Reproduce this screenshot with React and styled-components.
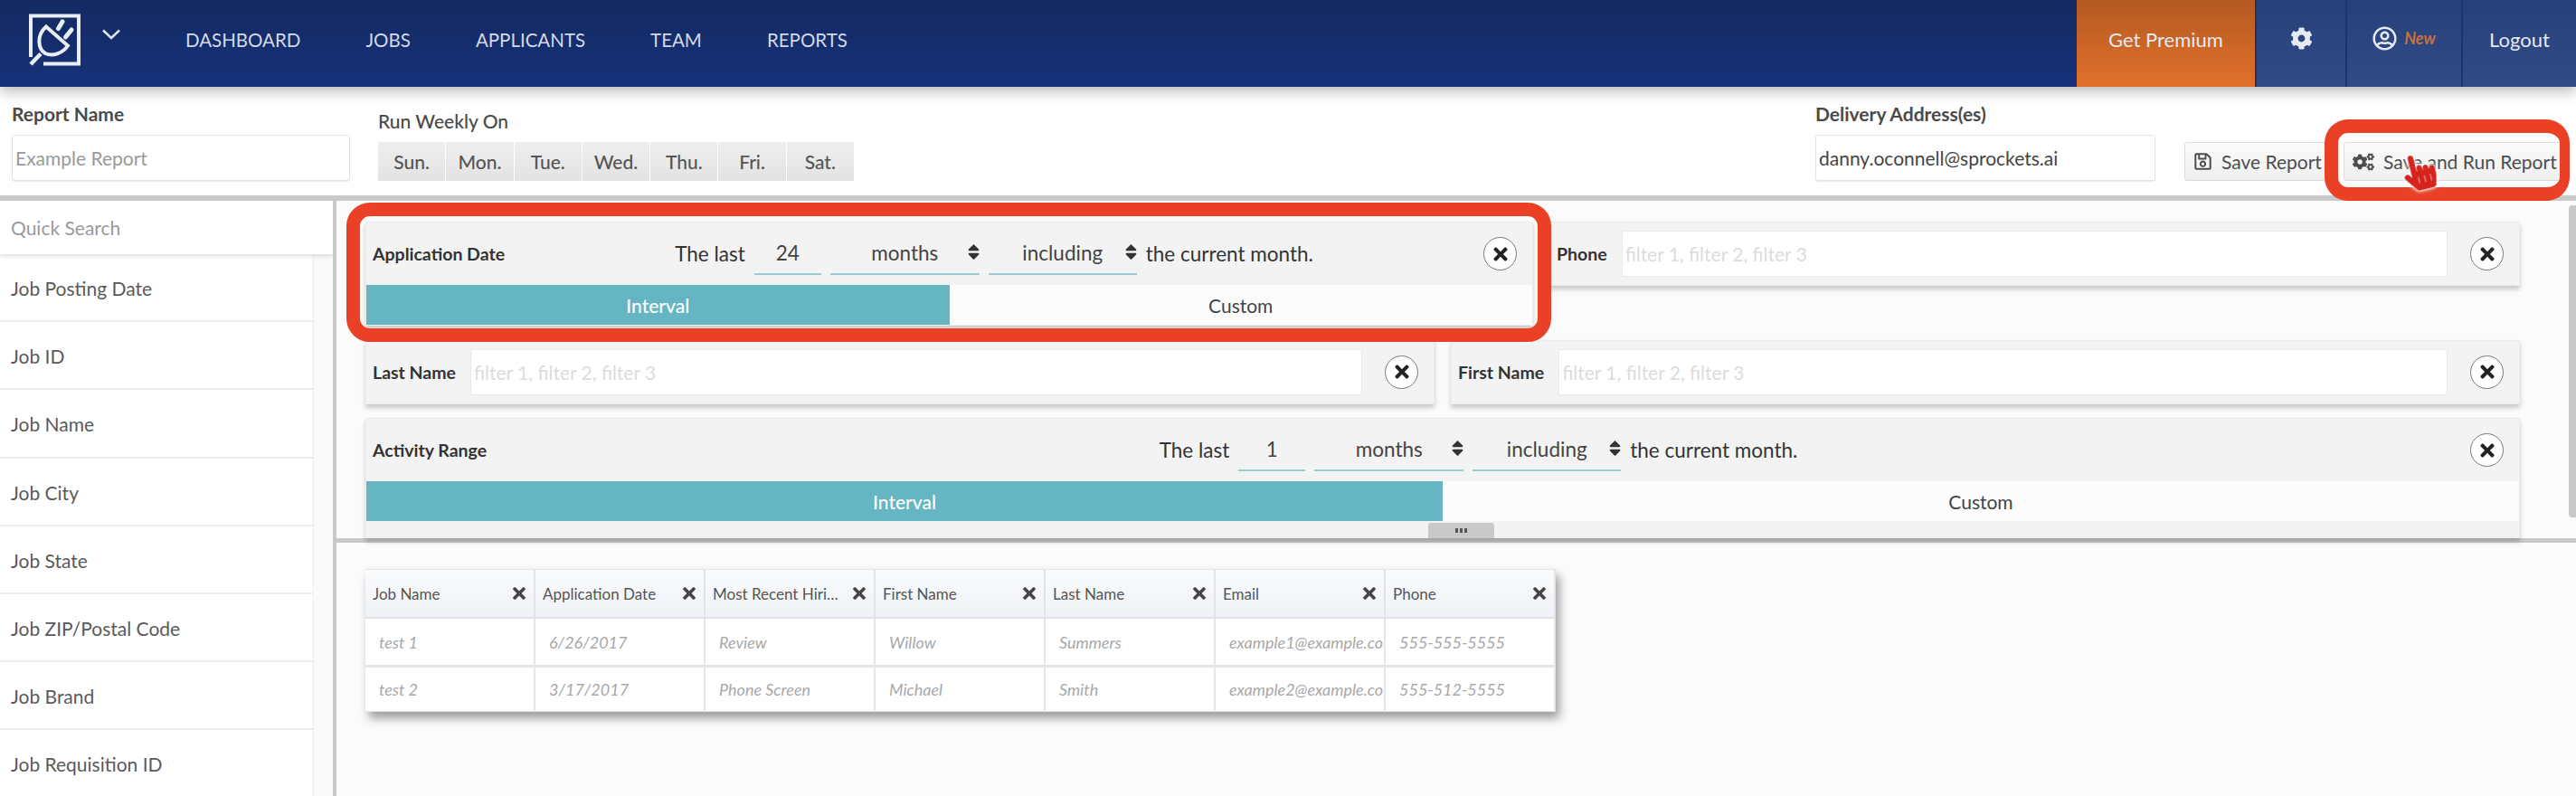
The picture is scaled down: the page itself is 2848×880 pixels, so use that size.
import styled, { createGlobalStyle } from "styled-components";
import { FaCog, FaRegUserCircle, FaRegSave, FaCogs, FaTimes, FaSort, FaHandPointer } from "react-icons/fa";

const NAV = ["DASHBOARD", "JOBS", "APPLICANTS", "TEAM", "REPORTS"];
const DAYS = ["Sun.", "Mon.", "Tue.", "Wed.", "Thu.", "Fri.", "Sat."];
const FIELDS = ["Job Posting Date", "Job ID", "Job Name", "Job City", "Job State", "Job ZIP/Postal Code", "Job Brand", "Job Requisition ID"];
const COLUMNS = ["Job Name", "Application Date", "Most Recent Hiring Stage", "First Name", "Last Name", "Email", "Phone"];
const ROWS = [
  ["test 1", "6/26/2017", "Review", "Willow", "Summers", "example1@example.com", "555-555-5555"],
  ["test 2", "3/17/2017", "Phone Screen", "Michael", "Smith", "example2@example.com", "555-512-5555"],
];
const PLACEHOLDER = "filter 1, filter 2, filter 3";

const GlobalStyle = createGlobalStyle`
  html, body {
    margin: 0;
    height: 100%;
    overflow: hidden;
    background: #fff;
    font-family: Lato, "Open Sans", sans-serif;
  }
  #root { height: 100%; }
  * { box-sizing: border-box; }
`;

const Page = styled.div`
  height: 880px;
  display: flex;
  flex-direction: column;
  overflow: hidden;
`;

const Header = styled.header`
  height: 96px;
  flex: none;
  display: flex;
  align-items: stretch;
  background: linear-gradient(#132960, #17327a);
  box-shadow: 0 5px 14px rgba(0, 0, 0, 0.28);
  position: relative;
  z-index: 2;
`;

const Brand = styled.div`
  display: flex;
  align-items: flex-start;
  padding: 15px 0 0 32px;
  width: 205px;
  flex: none;
`;

const Chevron = styled.svg`
  width: 20px;
  height: 12px;
  margin: 17px 0 0 24px;
`;

const Nav = styled.nav`
  display: flex;
  align-items: center;
  gap: 72px;
  padding-bottom: 9px;
  flex: 1;
`;

const NavLink = styled.a`
  color: #d3d8e6;
  font-size: 20.500px;
`;

const HeaderTab = styled.div`
  width: ${(p) => p.$width}px;
  display: flex;
  align-items: center;
  justify-content: center;
  gap: 8px;
  padding-bottom: ${(p) => p.$lift || 9}px;
  color: #e6e9f1;
  font-size: 22px;
  background: ${(p) => (p.$accent ? "linear-gradient(#b45a22, #e2702b)" : "linear-gradient(#27407a, #304b87)")};
  border-left: ${(p) => (p.$accent ? "none" : "2px solid #1b3470")};
`;

const NewBadge = styled.em`
  color: #c8703a;
  font-size: 18px;
  font-weight: 700;
`;

const FormBar = styled.section`
  height: 120px;
  flex: none;
  display: flex;
  align-items: flex-end;
  padding: 0 15px 16px 13px;
`;

const FormField = styled.div`
  width: ${(p) => p.$width}px;
  margin-right: ${(p) => p.$after || 0}px;
  margin-left: ${(p) => (p.$push ? "auto" : "0")};
  flex: none;
`;

const FieldLabel = styled.div`
  color: #4a4a4a;
  font-size: 21px;
  font-weight: ${(p) => (p.$light ? 500 : 700)};
  line-height: 25px;
  margin-bottom: 11px;
`;

const TextInput = styled.input`
  width: 100%;
  height: 51px;
  padding: 0 3px;
  border: 1px solid #e2e2e2;
  border-radius: 3px;
  background: #fff;
  box-shadow: 0 1px 1px rgba(0, 0, 0, 0.08);
  color: #444;
  font: 400 21px Lato, sans-serif;
  &::placeholder { color: #9a9a9a; opacity: 1; }
`;

const DayGroup = styled.div`
  display: flex;
  gap: 1px;
`;

const Day = styled.div`
  flex: 1;
  height: 43px;
  display: flex;
  align-items: center;
  justify-content: center;
  background: linear-gradient(#eeeeee, #e3e3e3);
  color: #555;
  font-size: 21px;
  font-weight: 500;
`;

const ActionButton = styled.button`
  position: relative;
  width: ${(p) => p.$width}px;
  height: 43px;
  flex: none;
  margin-left: ${(p) => p.$before}px;
  display: flex;
  align-items: center;
  gap: 10px;
  padding: 0 0 0 9px;
  border: 1px solid #dcdcdc;
  border-radius: 3px;
  background: linear-gradient(#fbfbfb, #efefef);
  color: #4d4d4d;
  font: 400 21px Lato, sans-serif;
  white-space: nowrap;
  svg { flex: none; }
`;

const Highlight = styled.div`
  position: absolute;
  top: ${(p) => p.$top}px;
  left: ${(p) => p.$left}px;
  right: ${(p) => p.$right}px;
  bottom: ${(p) => p.$bottom}px;
  border: 15px solid #ea4025;
  border-right-width: ${(p) => p.$rightWidth || 15}px;
  border-radius: 26px;
  z-index: 3;
  pointer-events: none;
`;

const HandCursor = styled.div`
  position: absolute;
  left: 63px;
  top: 12px;
  z-index: 4;
  line-height: 0;
  transform: rotate(-14deg);
  color: #d5231e;
  filter: drop-shadow(0 0 2px #fff) drop-shadow(0 0 1px #fff);
`;

const Workspace = styled.div`
  flex: 1;
  min-height: 0;
  display: flex;
  border-top: 6px solid #c9c9c9;
`;

const Sidebar = styled.aside`
  width: 372px;
  flex: none;
  border-right: 4px solid #c9c9c9;
  display: flex;
  flex-direction: column;
  overflow: hidden;
`;

const QuickSearch = styled.div`
  height: 59px;
  flex: none;
  display: flex;
  align-items: center;
  padding-left: 12px;
  color: #9a9a9a;
  font-size: 21px;
  position: relative;
  box-shadow: 0 2px 5px rgba(0, 0, 0, 0.14);
`;

const FieldScroller = styled.div`
  flex: 1;
  background: #fafafa;
`;

const FieldList = styled.div`
  width: 347px;
  background: #fff;
  border-right: 1px solid #ededed;
`;

const FieldRow = styled.div`
  height: 75.200px;
  display: flex;
  align-items: center;
  padding: 2px 0 0 12px;
  border-bottom: 2px solid #eeeeee;
  color: #5a5a5a;
  font-size: 21px;
`;

const Main = styled.main`
  flex: 1;
  min-width: 0;
  display: flex;
  flex-direction: column;
  background: #fbfbfb;
`;

const FilterArea = styled.section`
  position: relative;
  height: 378px;
  flex: none;
  padding: 23px 62px 0 32px;
  display: flex;
  flex-direction: column;
  gap: 15.500px;
  border-bottom: 5px solid #c9c9c9;
`;

const FilterRow = styled.div`
  display: flex;
  align-items: flex-start;
  gap: 18px;
`;

const Panel = styled.div`
  position: relative;
  width: ${(p) => (p.$width ? `${p.$width}px` : "auto")};
  flex: ${(p) => (p.$width ? "none" : "1")};
  min-width: 0;
  background: #f3f3f3;
  border: 1px solid #ececec;
  box-shadow: 0 4px 5px rgba(0, 0, 0, 0.2);
`;

const PanelTop = styled.div`
  height: 69px;
  display: flex;
  align-items: center;
  padding: 0 17px 0 7px;
`;

const PanelLabel = styled.div`
  color: #333;
  font-size: 19.500px;
  font-weight: 700;
  white-space: nowrap;
`;

const Sentence = styled.div`
  flex: 1;
  display: flex;
  align-items: center;
  justify-content: center;
  gap: 10px;
  color: #333;
  font-size: 22.500px;
  white-space: nowrap;
`;

const Underlined = styled.div`
  position: relative;
  width: ${(p) => p.$width}px;
  height: 46px;
  display: flex;
  align-items: center;
  justify-content: center;
  border-bottom: 2px solid #9dcbd3;
  color: #444;
  font-size: 22.500px;
  svg {
    position: absolute;
    right: -4px;
    top: 10px;
    color: #333;
  }
`;

const CloseButton = styled.button`
  width: 37px;
  height: 37px;
  flex: none;
  display: flex;
  align-items: center;
  justify-content: center;
  padding: 0;
  border: 1px solid #7a7a7a;
  border-radius: 50%;
  background: #fff;
  color: #222;
`;

const FilterInput = styled.input`
  flex: 1;
  min-width: 0;
  height: 51px;
  margin: 0 25px 0 16px;
  padding: 0 3px;
  border: 1px solid #eaeaea;
  border-radius: 2px;
  background: #fff;
  font: 400 21px Lato, sans-serif;
  &::placeholder { color: #dcdcdc; opacity: 1; }
`;

const Tabs = styled.div`
  height: 44px;
  display: flex;
`;

const Tab = styled.div`
  flex: 1;
  display: flex;
  align-items: center;
  justify-content: center;
  background: ${(p) => (p.$active ? "#66b5c3" : "#fcfcfc")};
  color: ${(p) => (p.$active ? "#fff" : "#444")};
  font-size: 21px;
  font-weight: ${(p) => (p.$active ? 500 : 400)};
`;

const Handle = styled.div`
  position: absolute;
  left: 1207px;
  bottom: 0;
  width: 73px;
  height: 17px;
  display: flex;
  align-items: center;
  justify-content: center;
  gap: 2px;
  border-radius: 3px 3px 0 0;
  background: #c9c9c9;
`;

const HandleDot = styled.span`
  width: 3px;
  height: 5px;
  background: #555;
`;

const ScrollThumb = styled.div`
  position: absolute;
  right: 0;
  top: 5px;
  width: 8px;
  height: 345px;
  border-radius: 4px 0 0 4px;
  background: #c9c9c9;
`;

const TableArea = styled.section`
  flex: 1;
  padding: 29px 0 0 32px;
`;

const Table = styled.div`
  width: 1316px;
  background: #fff;
  box-shadow: 4px 7px 10px rgba(0, 0, 0, 0.38);
`;

const TableRow = styled.div`
  display: grid;
  grid-template-columns: repeat(7, 1fr);
  height: ${(p) => p.$height}px;
  border-bottom: ${(p) => p.$rule || 0}px solid #e6e6e6;
`;

const HeadCell = styled.div`
  min-width: 0;
  display: flex;
  align-items: center;
  gap: 7px;
  padding: 0 6px 0 8px;
  background: linear-gradient(#fafbfd, #eff2f6);
  border: solid #e2e4e8;
  border-width: 1px 2px 2px 0;
  color: #555;
  font-size: 17px;
  svg { flex: none; color: #444; }
`;

const HeadText = styled.span`
  flex: 1;
  min-width: 0;
  overflow: hidden;
  white-space: nowrap;
  text-overflow: ellipsis;
`;

const BodyCell = styled.div`
  min-width: 0;
  display: flex;
  align-items: center;
  padding-left: 15px;
  overflow: hidden;
  white-space: nowrap;
  border-right: 2px solid #e6e6e6;
  color: #a8a8a8;
  font-size: 18px;
  font-style: italic;
`;

const Logo = () => (
  <svg width="57" height="58" viewBox="0 0 57 58" fill="none" stroke="#e9edf4" strokeWidth="4">
    <path d="M2 48V2.500H55V55.500H16" />
    <path d="M2 56L13 44.500" strokeWidth="4.500" />
    <path d="M19 14.500L43 35.500C38 43 27 48 18 44C10 39 8 24 19 14.500Z" />
    <path d="M37 9L32.500 16.500M47 18L40.500 26" strokeWidth="5" strokeLinecap="round" />
  </svg>
);

const Close = () => (
  <CloseButton>
    <FaTimes size={22} />
  </CloseButton>
);

const IntervalFilter = ({ label, count, width, highlighted }) => (
  <Panel $width={width}>
    {highlighted && <Highlight $top={-22} $left={-22} $right={-21} $bottom={-19} />}
    <PanelTop>
      <PanelLabel>{label}</PanelLabel>
      <Sentence>
        <span>The last</span>
        <Underlined $width={74}>{count}</Underlined>
        <Underlined $width={165}>months<FaSort size={21} /></Underlined>
        <Underlined $width={164}>including<FaSort size={21} /></Underlined>
        <span>the current month.</span>
      </Sentence>
      <Close />
    </PanelTop>
    <Tabs>
      <Tab $active>Interval</Tab>
      <Tab>Custom</Tab>
    </Tabs>
  </Panel>
);

const TextFilter = ({ label, width }) => (
  <Panel $width={width}>
    <PanelTop>
      <PanelLabel>{label}</PanelLabel>
      <FilterInput placeholder={PLACEHOLDER} />
      <Close />
    </PanelTop>
  </Panel>
);

export default function App() {
  return (
    <Page>
      <GlobalStyle />
      <Header>
        <Brand>
          <Logo />
          <Chevron viewBox="0 0 20 12" fill="none" stroke="#dfe4ee" strokeWidth="2.500">
            <path d="M1 1.500L10 10L19 1.500" />
          </Chevron>
        </Brand>
        <Nav>
          {NAV.map((item) => (
            <NavLink key={item}>{item}</NavLink>
          ))}
        </Nav>
        <HeaderTab $width={197} $accent>Get Premium</HeaderTab>
        <HeaderTab $width={100} $lift={12}><FaCog size={25} /></HeaderTab>
        <HeaderTab $width={128} $lift={12}><FaRegUserCircle size={27} /><NewBadge>New</NewBadge></HeaderTab>
        <HeaderTab $width={127}>Logout</HeaderTab>
      </Header>

      <FormBar>
        <FormField $width={374} $after={31}>
          <FieldLabel>Report Name</FieldLabel>
          <TextInput placeholder="Example Report" />
        </FormField>
        <FormField $width={526}>
          <FieldLabel $light>Run Weekly On</FieldLabel>
          <DayGroup>
            {DAYS.map((day) => (
              <Day key={day}>{day}</Day>
            ))}
          </DayGroup>
        </FormField>
        <FormField $width={376} $push>
          <FieldLabel>Delivery Address(es)</FieldLabel>
          <TextInput defaultValue="danny.oconnell@sprockets.ai" />
        </FormField>
        <ActionButton $width={164} $before={32}>
          <FaRegSave size={21} />
          Save Report
        </ActionButton>
        <ActionButton $width={242} $before={12}>
          <FaCogs size={24} />
          Save and Run Report
          <Highlight $top={-26} $left={-22} $right={-9} $bottom={-23} $rightWidth={11} />
          <HandCursor><FaHandPointer size={40} /></HandCursor>
        </ActionButton>
      </FormBar>

      <Workspace>
        <Sidebar>
          <QuickSearch>Quick Search</QuickSearch>
          <FieldScroller>
            <FieldList>
              {FIELDS.map((field) => (
                <FieldRow key={field}>{field}</FieldRow>
              ))}
            </FieldList>
          </FieldScroller>
        </Sidebar>
        <Main>
          <FilterArea>
            <FilterRow>
              <IntervalFilter label="Application Date" count="24" width={1291} highlighted />
              <TextFilter label="Phone" />
            </FilterRow>
            <FilterRow>
              <TextFilter label="Last Name" />
              <TextFilter label="First Name" />
            </FilterRow>
            <IntervalFilter label="Activity Range" count="1" />
            <ScrollThumb />
            <Handle>
              <HandleDot />
              <HandleDot />
              <HandleDot />
            </Handle>
          </FilterArea>
          <TableArea>
            <Table>
              <TableRow $height={55}>
                {COLUMNS.map((col) => (
                  <HeadCell key={col}>
                    <HeadText>{col}</HeadText>
                    <FaTimes size={20} />
                  </HeadCell>
                ))}
              </TableRow>
              {ROWS.map((row, i) => (
                <TableRow key={row[0]} $height={i === 0 ? 54 : 49} $rule={i === 0 ? 3 : 1}>
                  {row.map((cell) => (
                    <BodyCell key={cell}>{cell}</BodyCell>
                  ))}
                </TableRow>
              ))}
            </Table>
          </TableArea>
        </Main>
      </Workspace>
    </Page>
  );
}
